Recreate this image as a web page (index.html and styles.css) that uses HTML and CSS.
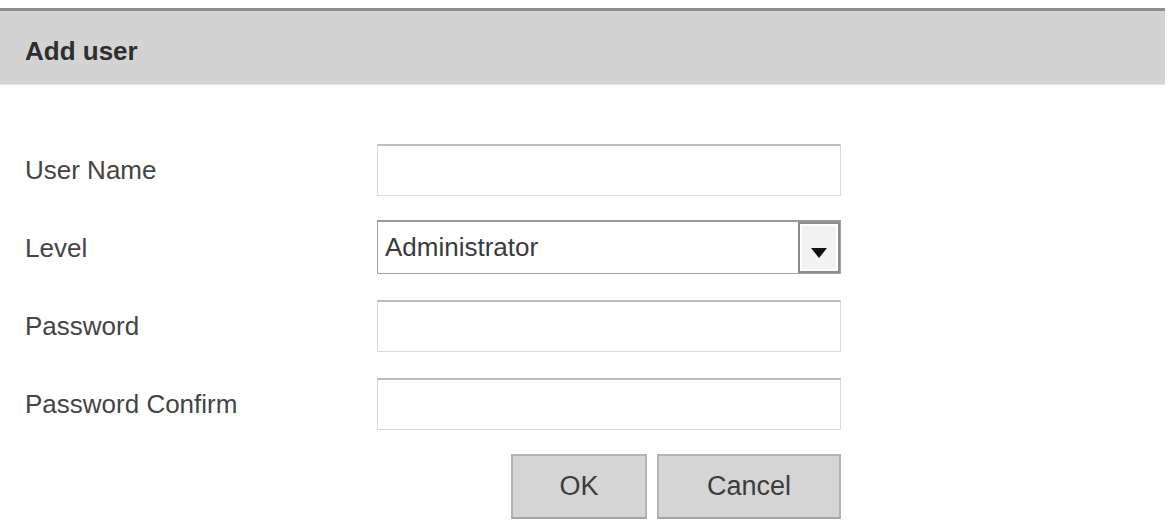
FILE: index.html
```html
<!DOCTYPE html>
<html lang="en">
<head>
    <title>Add user</title>
    <link rel="stylesheet" href="styles.css">
</head>
<body>
    <div class="header">Add user</div>
    <div class="form">
        <label class="lbl" for="userName">User Name</label>
        <input class="field" id="userName" type="text">

        <label class="lbl">Level</label>
        <div class="select">
            <span class="selectVal">Administrator</span>
            <span class="selectBtn">
                <svg width="16" height="10" viewBox="0 0 16 10"><path d="M0 0 L16 0 L8 10 Z" fill="#111"/></svg>
            </span>
        </div>

        <label class="lbl" for="pwd">Password</label>
        <input class="field" id="pwd" type="password">

        <label class="lbl" for="pwd2">Password Confirm</label>
        <input class="field" id="pwd2" type="password">

        <div class="actions">
            <button class="btn ok">OK</button>
            <button class="btn cancel">Cancel</button>
        </div>
    </div>
</body>
</html>
```

FILE: styles.css
```css
body{
    margin: 0;
    background: #fff;
    font-family: "Liberation Sans", Arial, sans-serif;
    color: #3d3d3d;
}
.header{
    margin-top: 8px;
    margin-right: 3px;
    height: 77px;
    box-sizing: border-box;
    border-top: 3px solid #8e8e8e;
    border-bottom: 1px solid #e4e4e4;
    background-color: #d3d3d3;
    padding: 8px 0 0 25px;
    display: flex;
    align-items: center;
    font-size: 26px;
    font-weight: bold;
    color: #2e2e2e;
}
.form{
    display: grid;
    grid-template-columns: 352px 464px;
    row-gap: 26px;
    align-items: center;
    padding: 59px 0 0 25px;
}
.lbl{
    font-size: 26px;
    color: #444;
}
.field{
    height: 52px;
    box-sizing: border-box;
    margin: 0;
    border: 1px solid #d9d9d9;
    border-top: 2px solid #bdbdbd;
    outline: none;
    font-size: 24px;
    font-family: inherit;
}
.select{
    height: 54px;
    box-sizing: border-box;
    border: 1px solid #a2a2a2;
    border-top: 2px solid #9a9a9a;
    display: flex;
    align-items: stretch;
    margin-top: -2px;
}
.selectVal{
    flex: 1;
    display: flex;
    align-items: center;
    padding-left: 7px;
    font-size: 26px;
    color: #3a3a3a;
}
.selectBtn{
    width: 42px;
    box-sizing: border-box;
    border: 2px solid #8c8c8c;
    background-color: #f2f2f2;
    box-shadow: inset 0 0 0 2px #fff;
    display: flex;
    align-items: flex-end;
    justify-content: center;
    padding-bottom: 13px;
}
.actions{
    grid-column: 2;
    display: flex;
    justify-content: flex-end;
    gap: 10px;
    margin-top: -2px;
}
.btn{
    height: 65px;
    box-sizing: border-box;
    background-color: #d5d5d5;
    border: 2px solid #b2b2b2;
    border-bottom-color: #a6a6a6;
    font-family: inherit;
    font-size: 27px;
    color: #3c3c3c;
}
.ok{
    width: 136px;
}
.cancel{
    width: 184px;
}
```
